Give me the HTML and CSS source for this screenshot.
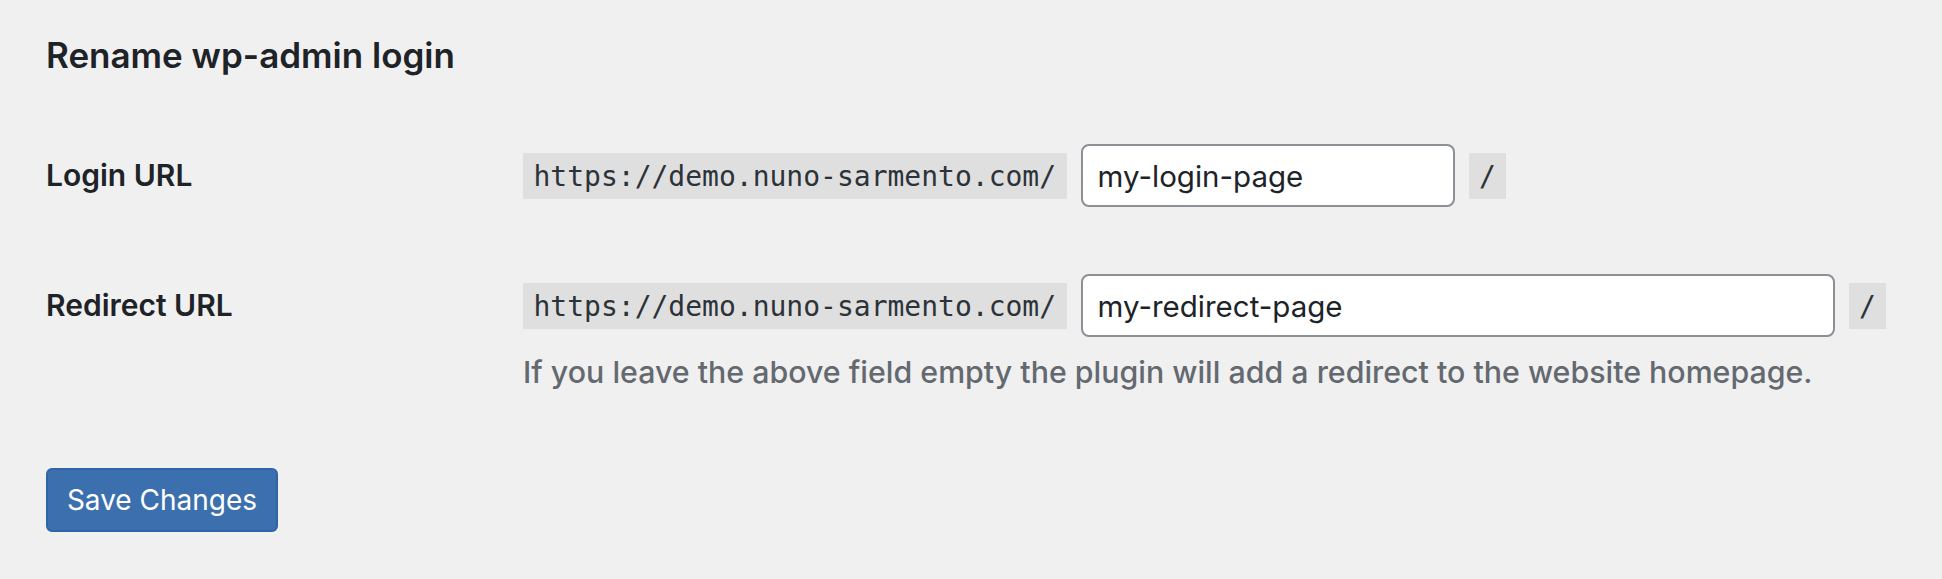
FILE: index.html
```html
<!DOCTYPE html>
<html lang="en">
<head>
<meta charset="utf-8">
<title>Rename wp-admin login</title>
<link rel="stylesheet" href="styles.css">
</head>
<body>
<div class="wrap">
  <h2 class="title">Rename wp-admin login</h2>
  <form class="form-table">
    <div class="row">
      <label class="label" for="login">Login URL</label>
      <div class="field">
        <div class="line">
          <code class="code">https://demo.nuno-sarmento.com/</code>
          <input class="input input-short" id="login" type="text" value="my-login-page">
          <code class="code">/</code>
        </div>
      </div>
    </div>
    <div class="row row-second">
      <label class="label" for="redirect">Redirect URL</label>
      <div class="field">
        <div class="line">
          <code class="code">https://demo.nuno-sarmento.com/</code>
          <input class="input input-long" id="redirect" type="text" value="my-redirect-page">
          <code class="code">/</code>
        </div>
        <p class="description">If you leave the above field empty the plugin will add a redirect to the website homepage.</p>
      </div>
    </div>
    <div class="submit">
      <button class="button-primary" type="button">Save Changes</button>
    </div>
  </form>
</div>
</body>
</html>
```
FILE: styles.css
```css
html, body {
  margin: 0;
  padding: 0;
  background: #f0f0f1;
}

body {
  font-family: "Inter", "Noto Sans", sans-serif;
  color: #1d2327;
}

.wrap {
  padding-left: 46px;
}

.title {
  margin: 35px 0 0;
  font-size: 35px;
  line-height: 40px;
  font-weight: 600;
  color: #1d2327;
}

.form-table {
  margin-top: 69px;
}

.row {
  display: grid;
  grid-template-columns: 477px 1fr;
  align-items: start;
}

.row-second {
  margin-top: 67px;
}

.label {
  margin-top: 13px;
  font-size: 30px;
  line-height: 36px;
  font-weight: 600;
  color: #1d2327;
}

.line {
  display: flex;
  align-items: center;
  gap: 14px;
  height: 63px;
}

.code {
  display: block;
  box-sizing: border-box;
  height: 46px;
  padding: 2px 10.5px 0;
  line-height: 44px;
  font-family: "DejaVu Sans Mono", "Liberation Mono", monospace;
  font-size: 28px;
  color: #2c3338;
  background: #dfdfe0;
  white-space: nowrap;
}

.input {
  box-sizing: border-box;
  height: 63px;
  margin: 0;
  padding: 0 15px;
  border: 2px solid #8c8f94;
  border-radius: 8px;
  background: #fff;
  font-family: "Inter", "Noto Sans", sans-serif;
  font-size: 29.5px;
  color: #1d2327;
  outline: none;
}

.input-short {
  width: 374px;
}

.input-long {
  width: 754px;
}

.description {
  margin: 17px 0 0;
  font-size: 30.35px;
  line-height: 36px;
  font-weight: 500;
  color: #646970;
}

.submit {
  margin-top: 78px;
}

.button-primary {
  box-sizing: border-box;
  width: 232px;
  height: 64px;
  padding: 0;
  border: 2px solid #2f65a6;
  border-radius: 6px;
  background: #3c6fad;
  color: #fff;
  font-family: "Inter", "Noto Sans", sans-serif;
  font-size: 28px;
  font-weight: 400;
  cursor: pointer;
}
```
